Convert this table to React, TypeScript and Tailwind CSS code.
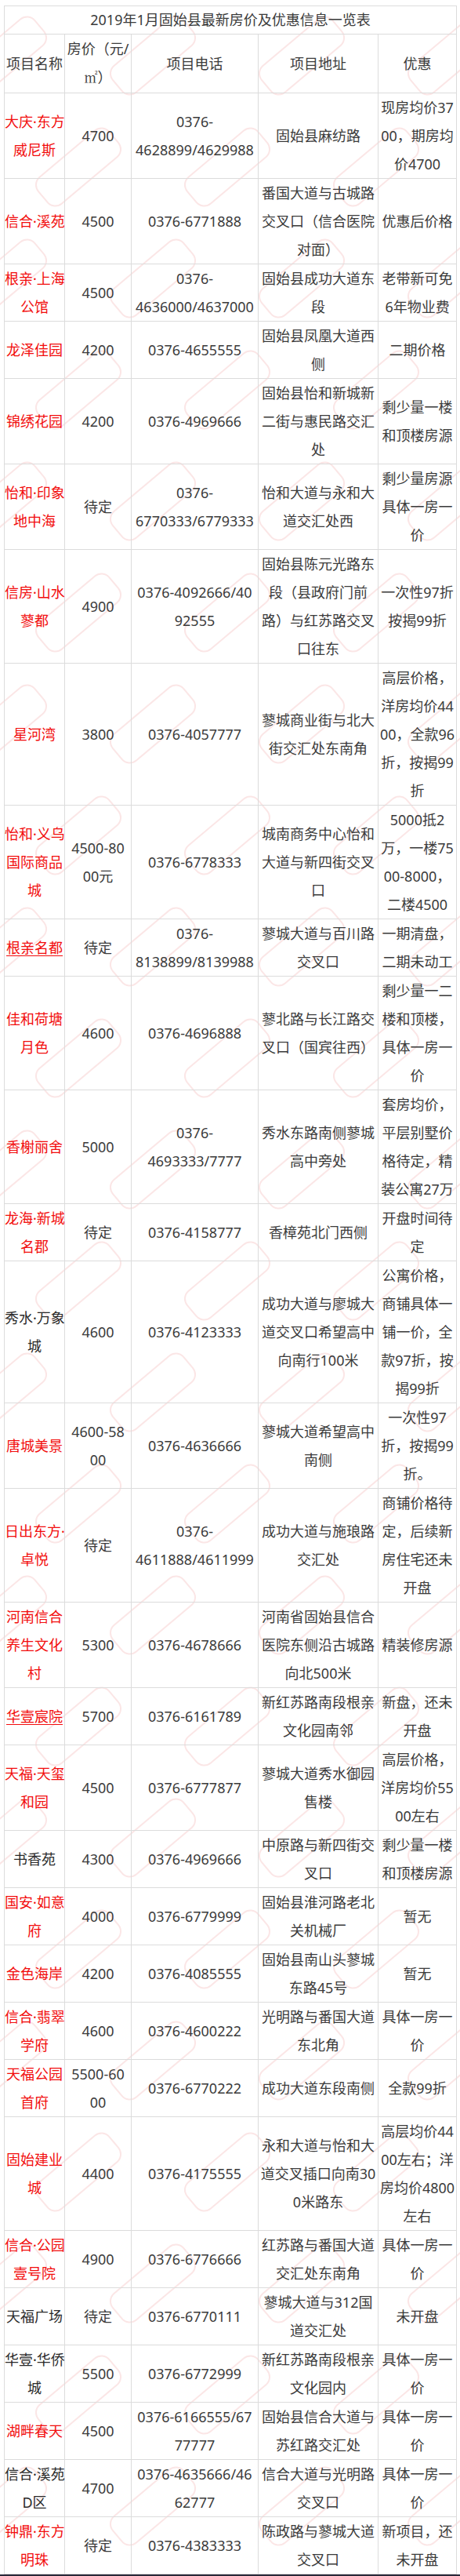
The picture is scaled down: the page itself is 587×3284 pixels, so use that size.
import React from "react";

type Row = {
  n: string;
  p: string;
  t: string;
  a: string;
  o: string;
  dark?: boolean;
  link?: boolean;
};

// lines inside a cell are split by "|"
const rows: Row[] = [
  { n: "大庆·东方|威尼斯", p: "4700", t: "0376-|4628899/4629988", a: "固始县麻纺路", o: "现房均价37|00，期房均|价4700" },
  { n: "信合·溪苑", p: "4500", t: "0376-6771888", a: "番国大道与古城路|交叉口（信合医院|对面）", o: "优惠后价格" },
  { n: "根亲·上海|公馆", p: "4500", t: "0376-|4636000/4637000", a: "固始县成功大道东|段", o: "老带新可免|6年物业费" },
  { n: "龙泽佳园", p: "4200", t: "0376-4655555", a: "固始县凤凰大道西|侧", o: "二期价格" },
  { n: "锦绣花园", p: "4200", t: "0376-4969666", a: "固始县怡和新城新|二街与惠民路交汇|处", o: "剩少量一楼|和顶楼房源" },
  { n: "怡和·印象|地中海", p: "待定", t: "0376-|6770333/6779333", a: "怡和大道与永和大|道交汇处西", o: "剩少量房源|具体一房一|价" },
  { n: "信房·山水|蓼都", p: "4900", t: "0376-4092666/40|92555", a: "固始县陈元光路东|段（县政府门前|路）与红苏路交叉|口往东", o: "一次性97折|按揭99折" },
  { n: "星河湾", p: "3800", t: "0376-4057777", a: "蓼城商业街与北大|街交汇处东南角", o: "高层价格，|洋房均价44|00，全款96|折，按揭99|折" },
  { n: "怡和·义乌|国际商品|城", p: "4500-80|00元", t: "0376-6778333", a: "城南商务中心怡和|大道与新四街交叉|口", o: "5000抵2|万，一楼75|00-8000，|二楼4500" },
  { n: "根亲名都", link: true, p: "待定", t: "0376-|8138899/8139988", a: "蓼城大道与百川路|交叉口", o: "一期清盘，|二期未动工" },
  { n: "佳和荷塘|月色", p: "4600", t: "0376-4696888", a: "蓼北路与长江路交|叉口（国宾往西）", o: "剩少量一二|楼和顶楼，|具体一房一|价" },
  { n: "香榭丽舍", p: "5000", t: "0376-|4693333/7777", a: "秀水东路南侧蓼城|高中旁处", o: "套房均价，|平层别墅价|格待定，精|装公寓27万" },
  { n: "龙海·新城|名郡", p: "待定", t: "0376-4158777", a: "香樟苑北门西侧", o: "开盘时间待|定" },
  { n: "秀水·万象|城", dark: true, p: "4600", t: "0376-4123333", a: "成功大道与廖城大|道交叉口希望高中|向南行100米", o: "公寓价格，|商铺具体一|铺一价，全|款97折，按|揭99折" },
  { n: "唐城美景", p: "4600-58|00", t: "0376-4636666", a: "蓼城大道希望高中|南侧", o: "一次性97|折，按揭99|折。" },
  { n: "日出东方·|卓悦", p: "待定", t: "0376-|4611888/4611999", a: "成功大道与施琅路|交汇处", o: "商铺价格待|定，后续新|房住宅还未|开盘" },
  { n: "河南信合|养生文化|村", p: "5300", t: "0376-4678666", a: "河南省固始县信合|医院东侧沿古城路|向北500米", o: "精装修房源" },
  { n: "华壹宸院", link: true, p: "5700", t: "0376-6161789", a: "新红苏路南段根亲|文化园南邻", o: "新盘，还未|开盘" },
  { n: "天福·天玺|和园", p: "4500", t: "0376-6777877", a: "蓼城大道秀水御园|售楼", o: "高层价格，|洋房均价55|00左右" },
  { n: "书香苑", dark: true, p: "4300", t: "0376-4969666", a: "中原路与新四街交|叉口", o: "剩少量一楼|和顶楼房源" },
  { n: "国安·如意|府", p: "4000", t: "0376-6779999", a: "固始县淮河路老北|关机械厂", o: "暂无" },
  { n: "金色海岸", p: "4200", t: "0376-4085555", a: "固始县南山头蓼城|东路45号", o: "暂无" },
  { n: "信合·翡翠|学府", p: "4600", t: "0376-4600222", a: "光明路与番国大道|东北角", o: "具体一房一|价" },
  { n: "天福公园|首府", p: "5500-60|00", t: "0376-6770222", a: "成功大道东段南侧", o: "全款99折" },
  { n: "固始建业|城", p: "4400", t: "0376-4175555", a: "永和大道与怡和大|道交叉插口向南30|0米路东", o: "高层均价44|00左右；洋|房均价4800|左右" },
  { n: "信合·公园|壹号院", p: "4900", t: "0376-6776666", a: "红苏路与番国大道|交汇处东南角", o: "具体一房一|价" },
  { n: "天福广场", dark: true, p: "待定", t: "0376-6770111", a: "蓼城大道与312国|道交汇处", o: "未开盘" },
  { n: "华壹·华侨|城", dark: true, p: "5500", t: "0376-6772999", a: "新红苏路南段根亲|文化园内", o: "具体一房一|价" },
  { n: "湖畔春天", p: "4500", t: "0376-6166555/67|77777", a: "固始县信合大道与|苏红路交汇处", o: "具体一房一|价" },
  { n: "信合·溪苑|D区", dark: true, p: "4700", t: "0376-4635666/46|62777", a: "信合大道与光明路|交叉口", o: "具体一房一|价" },
  { n: "钟鼎·东方|明珠", p: "待定", t: "0376-4383333", a: "陈政路与蓼城大道|交叉口", o: "新项目，还|未开盘" },
];

function Lines({ text }: { text: string }) {
  return (
    <>
      {text.split("|").map((l, i) => (
        <div key={i} className="whitespace-nowrap">
          {l}
        </div>
      ))}
    </>
  );
}

const td = "border border-[#dcdcdc] p-0 text-center align-middle";

// faint diagonal stamp outlines behind the table (no text)
function Watermark() {
  const tiles = Array.from({ length: 24 * 4 });
  return (
    <div className="pointer-events-none absolute inset-0 overflow-hidden">
      <div className="flex w-[760px] -ml-[90px] flex-wrap">
        {tiles.map((_, i) => (
          <div
            key={i}
            className={`flex h-[142px] w-[190px] items-center justify-center ${
              Math.floor(i / 4) % 2 === 1 ? "translate-x-[95px]" : ""
            }`}
          >
            <div className="h-[46px] w-[120px] -rotate-[40deg] rounded-[14px] border-2 border-[#fbe6e6]" />
          </div>
        ))}
      </div>
    </div>
  );
}

export default function App() {
  return (
    <main
      className="relative w-[587px] bg-white text-[18px] leading-[36px] text-[#3b3b3b]"
      style={{ fontFamily: '"Noto Sans", "Noto Sans CJK SC", sans-serif' }}
    >
      <Watermark />
      <div className="relative pt-[7px] pl-[5px]">
        <table className="w-[577px] table-fixed border-collapse">
          <colgroup>
            <col className="w-[77px]" />
            <col className="w-[85px]" />
            <col className="w-[162px]" />
            <col className="w-[153px]" />
            <col className="w-[100px]" />
          </colgroup>
          <tbody>
            <tr>
              <td colSpan={5} className={`${td} leading-[35px]`}>
                2019年1月固始县最新房价及优惠信息一览表
              </td>
            </tr>
            <tr>
              <td className={td}>项目名称</td>
              <td className={td}>
                <div className="whitespace-nowrap">房价（元/</div>
                <div className="whitespace-nowrap">
                  <span className="font-['Liberation_Serif','Noto_Serif_CJK_SC',serif] text-[17px]">㎡</span>）
                </div>
              </td>
              <td className={td}>项目电话</td>
              <td className={td}>项目地址</td>
              <td className={td}>优惠</td>
            </tr>
            {rows.map((r, i) => (
              <tr key={i}>
                <td className={`${td} ${r.dark ? "text-[#2a2a2a]" : "text-[#f20d0d]"}`}>
                  {r.link ? (
                    <span className="underline decoration-1 underline-offset-[3px]">{r.n}</span>
                  ) : (
                    <Lines text={r.n} />
                  )}
                </td>
                <td className={td}>
                  <Lines text={r.p} />
                </td>
                <td className={td}>
                  <Lines text={r.t} />
                </td>
                <td className={td}>
                  <Lines text={r.a} />
                </td>
                <td className={td}>
                  <Lines text={r.o} />
                </td>
              </tr>
            ))}
          </tbody>
        </table>
      </div>
      <div className="relative h-[5px] bg-[#2b2a3a]" />
    </main>
  );
}
